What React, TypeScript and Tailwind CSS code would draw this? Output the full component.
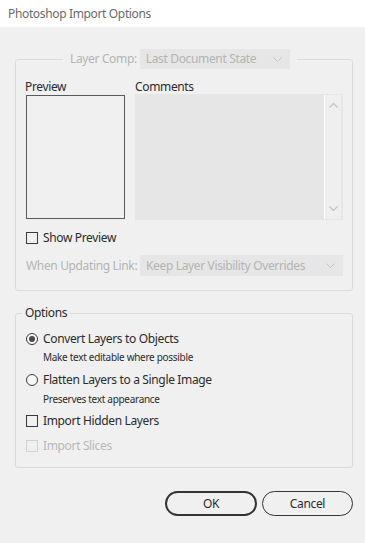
import React from 'react'

const font = { fontFamily: '"Noto Sans", "Liberation Sans", sans-serif' }

function Chevron() {
  return (
    <svg width="9" height="5" viewBox="0 0 9 5" className="shrink-0">
      <polyline points="0.5,0.5 4.5,4.5 8.5,0.5" fill="none" stroke="#c4c4c4" strokeWidth="1" />
    </svg>
  )
}

function Dropdown({ value, width }: { value: string; width: string }) {
  return (
    <div className={`flex shrink-0 items-center justify-between bg-[#e6e6e6] pl-[6px] pr-[8px] ${width}`}>
      <span className="whitespace-nowrap text-[12px] leading-none text-[#b4b4b4]">{value}</span>
      <Chevron />
    </div>
  )
}

function Checkbox({ label, disabled = false }: { label: string; disabled?: boolean }) {
  return (
    <div className="flex h-[16px] items-center gap-[5px]">
      <span
        className={`block h-[12px] w-[12px] border ${disabled ? 'border-[#d0d0d0]' : 'border-[#3a3a3a]'}`}
      />
      <span className={`text-[12px] ${disabled ? 'text-[#b8b8b8]' : 'text-[#2b2b2b]'}`}>{label}</span>
    </div>
  )
}

function Radio({ label, checked = false }: { label: string; checked?: boolean }) {
  return (
    <div className="flex h-[16px] items-center gap-[5px]">
      <span className="flex h-[12px] w-[12px] items-center justify-center rounded-full border border-[#3a3a3a] bg-[#f7f7f7]">
        {checked && <span className="block h-[6px] w-[6px] rounded-full bg-[#4a4a4a]" />}
      </span>
      <span className="text-[12px] text-[#2b2b2b]">{label}</span>
    </div>
  )
}

export default function App() {
  return (
    <div className="h-[543px] w-[365px] bg-[#f0f0f0] tracking-[-0.35px]" style={font}>
      {/* title bar */}
      <div className="flex h-[27px] items-center bg-white pl-[8px] text-[12px] text-[#6a6a6a]">
        Photoshop Import Options
      </div>

      <div className="pl-[15px] pr-[12px]">
        {/* layer comp group */}
        <fieldset className="mt-[22px] rounded-[3px] border border-[#dadada] pb-[14px] pl-[10px] pr-[9px]">
          <legend className="ml-[37px] flex items-center px-[7px]">
            <span className="mr-[3px] whitespace-nowrap text-[12px] text-[#b4b4b4]">Layer Comp:</span>
            <Dropdown value="Last Document State" width="h-[20px] w-[150px]" />
          </legend>

          <div className="mt-[10px] flex gap-[10px]">
            <div>
              <div className="-ml-[1px] h-[16px] text-[12px] leading-[16px] text-[#2b2b2b]">Preview</div>
              <div className="h-[124px] w-[99px] border border-[#5a5a5a]" />
            </div>
            <div className="flex-1">
              <div className="h-[15px] text-[12px] leading-[15px] text-[#2b2b2b]">Comments</div>
              <div className="flex h-[126px] bg-[#e6e6e6]">
                <div className="flex-1" />
                <div className="my-[1px] mr-[2px] flex w-[17px] flex-col items-center justify-between border-l border-white bg-[#efefef] py-[8px]">
                  <svg width="9" height="5" viewBox="0 0 9 5">
                    <polyline points="0.5,4.5 4.5,0.5 8.5,4.5" fill="none" stroke="#c4c4c4" strokeWidth="1.2" />
                  </svg>
                  <svg width="9" height="5" viewBox="0 0 9 5">
                    <polyline points="0.5,0.5 4.5,4.5 8.5,0.5" fill="none" stroke="#c4c4c4" strokeWidth="1.2" />
                  </svg>
                </div>
              </div>
            </div>
          </div>

          <div className="mt-[10px]">
            <Checkbox label="Show Preview" />
          </div>

          <div className="mt-[9px] flex items-center justify-between">
            <span className="whitespace-nowrap text-[12px] text-[#b4b4b4]">When Updating Link:</span>
            <Dropdown value="Keep Layer Visibility Overrides" width="h-[21px] w-[203px]" />
          </div>
        </fieldset>

        {/* options group */}
        <fieldset className="mt-[14px] rounded-[3px] border border-[#dadada] pb-[13px] pl-[10px] pr-[9px]">
          <legend className="-ml-[4px] px-[3px] text-[12px] leading-[16px] text-[#2b2b2b]">Options</legend>

          <div className="mt-[10px]">
            <Radio label="Convert Layers to Objects" checked />
          </div>
          <div className="mt-[3px] pl-[17px] text-[10px] leading-[14px] tracking-[-0.3px] text-[#2b2b2b]">
            Make text editable where possible
          </div>
          <div className="mt-[8px]">
            <Radio label="Flatten Layers to a Single Image" />
          </div>
          <div className="mt-[4px] pl-[17px] text-[10px] leading-[14px] tracking-[-0.3px] text-[#2b2b2b]">
            Preserves text appearance
          </div>
          <div className="mt-[7px]">
            <Checkbox label="Import Hidden Layers" />
          </div>
          <div className="mt-[9px]">
            <Checkbox label="Import Slices" disabled />
          </div>
        </fieldset>

        <div className="mt-[23px] flex justify-end gap-[5px]">
          <button className="h-[25px] w-[92px] rounded-full border-2 border-[#333] text-[12px] text-[#2b2b2b]">
            OK
          </button>
          <button className="h-[25px] w-[91px] rounded-full border border-[#333] text-[12px] text-[#2b2b2b]">
            Cancel
          </button>
        </div>
      </div>
    </div>
  )
}
